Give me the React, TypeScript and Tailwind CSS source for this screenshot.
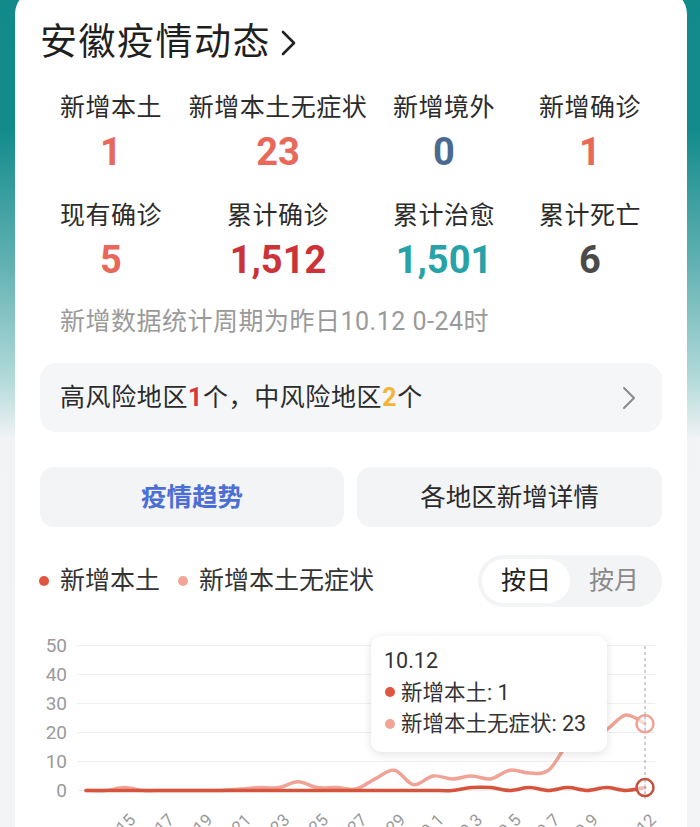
import React from "react";

const X0 = 86;
const DX = 19.276;
const yOf = (v: number) => 790.5 - v * 2.9;

const pink = [0,0,1,0,0,0,0,0,0.5,1,1,3,1,1,0.5,4,7,2,5,4,5,4,7,6,7,16,19,21,26,23];
const red = [0,0,0,0,0,0,0,0,0,0,0,0,0,0,0,0,0,0,0,0,1,1,0,1,0,1,0,1,0,1];

function smoothPath(vals: number[]) {
  const pts = vals.map((v, i) => [X0 + i * DX, yOf(v)]);
  let d = `M${pts[0][0].toFixed(1)},${pts[0][1].toFixed(1)}`;
  for (let i = 0; i < pts.length - 1; i++) {
    const p0 = pts[i - 1] || pts[i];
    const p1 = pts[i];
    const p2 = pts[i + 1];
    const p3 = pts[i + 2] || p2;
    const t = 0.17;
    const c1x = p1[0] + (p2[0] - p0[0]) * t;
    const c1y = p1[1] + (p2[1] - p0[1]) * t;
    const c2x = p2[0] - (p3[0] - p1[0]) * t;
    const c2y = p2[1] - (p3[1] - p1[1]) * t;
    d += ` C${c1x.toFixed(1)},${c1y.toFixed(1)} ${c2x.toFixed(1)},${c2y.toFixed(1)} ${p2[0].toFixed(1)},${p2[1].toFixed(1)}`;
  }
  return d;
}

const xLabels: [number, string][] = [
  [2, "9.15"], [4, "9.17"], [6, "9.19"], [8, "9.21"], [10, "9.23"], [12, "9.25"], [14, "9.27"],
  [16, "9.29"], [18, "10.1"], [20, "10.3"], [22, "10.5"], [24, "10.7"], [26, "10.9"], [29, "10.12"],
];

function Stat({ label, value, color, w }: { label: string; value: string; color: string; w: string }) {
  return (
    <div className={`flex flex-col items-center ${w}`}>
      <div className="h-[30px] leading-[30px] text-[25px] tracking-[0.5px] text-[#2b2b2b] whitespace-nowrap">{label}</div>
      <div className={`mt-[7px] h-[44px] leading-[44px] text-[38px] font-bold ${color}`}>{value}</div>
    </div>
  );
}

export default function App() {
  const w = ["w-[142px]", "w-[192px]", "w-[140px]", "w-[152px]"];
  return (
    <div className="w-[700px] h-[827px] overflow-hidden bg-[linear-gradient(to_bottom,#128a8b_0px,#138b8c_130px,#5fb0b1_260px,#b3dada_380px,#f2f3f5_440px,#f3f4f6_827px)] font-[Roboto,'Noto_Sans_CJK_SC',sans-serif]">
      <div className="ml-[15px] w-[672px] -mt-[10px] rounded-t-[24px] bg-white pt-[31px] h-[900px]">
        {/* Title */}
        <div className="flex items-center h-[44px] pl-[25px]">
          <span className="text-[37px] leading-[44px] tracking-[1.5px] text-[#1f1f1f]">安徽疫情动态</span>
          <svg width="22" height="28" viewBox="0 0 22 28" className="ml-[7px]">
            <path d="M5 3 L16 14 L5 25" fill="none" stroke="#222" strokeWidth="2.6" strokeLinecap="round" strokeLinejoin="round" />
          </svg>
        </div>

        {/* Stats */}
        <div className="flex pl-[25px] mt-[28px]">
          <Stat label="新增本土" value="1" color="text-[#e8685a]" w={w[0]} />
          <Stat label="新增本土无症状" value="23" color="text-[#e8685a]" w={w[1]} />
          <Stat label="新增境外" value="0" color="text-[#4b6a92]" w={w[2]} />
          <Stat label="新增确诊" value="1" color="text-[#e8685a]" w={w[3]} />
        </div>
        <div className="flex pl-[25px] mt-[27px]">
          <Stat label="现有确诊" value="5" color="text-[#e8685a]" w={w[0]} />
          <Stat label="累计确诊" value="1,512" color="text-[#cc3338]" w={w[1]} />
          <Stat label="累计治愈" value="1,501" color="text-[#27a2a6]" w={w[2]} />
          <Stat label="累计死亡" value="6" color="text-[#4a4a4a]" w={w[3]} />
        </div>

        {/* Note */}
        <div className="mt-[25px] pl-[45px] h-[30px] leading-[30px] text-[25px] tracking-[0.5px] text-[#9a9a9a]">
          新增数据统计周期为昨日10.12 0-24时
        </div>

        {/* Risk */}
        <div className="mx-[25px] mt-[26px] h-[69px] rounded-[16px] bg-[#f5f6f8] flex items-center justify-between pl-[20px] pr-[26px]">
          <span className="text-[25px] tracking-[0.6px] text-[#2b2b2b]">
            高风险地区<span className="font-bold text-[#d23a3f]">1</span>个，中风险地区<span className="font-bold text-[#f3b43a]">2</span>个
          </span>
          <svg width="14" height="24" viewBox="0 0 14 24">
            <path d="M2 2 L12 12 L2 22" fill="none" stroke="#8a8a8a" strokeWidth="2" strokeLinecap="round" strokeLinejoin="round" />
          </svg>
        </div>

        {/* Tabs */}
        <div className="mx-[25px] mt-[35px] flex gap-[13px]">
          <div className="w-[304px] h-[60px] rounded-[14px] bg-[#f3f4f6] flex items-center justify-center text-[25.5px] font-bold text-[#4c6fd6]">疫情趋势</div>
          <div className="w-[305px] h-[60px] rounded-[14px] bg-[#f3f4f6] flex items-center justify-center text-[25.5px] text-[#2b2b2b]">各地区新增详情</div>
        </div>

        {/* Legend + toggle */}
        <div className="mt-[28px] flex items-center justify-between pl-[24px] pr-[25px]">
          <div className="flex items-center">
            <span className="w-[10px] h-[10px] rounded-full bg-[#df553d]" />
            <span className="ml-[11px] text-[25px] text-[#333]">新增本土</span>
            <span className="ml-[18px] w-[10px] h-[10px] rounded-full bg-[#f2a497]" />
            <span className="ml-[11px] text-[25px] text-[#333]">新增本土无症状</span>
          </div>
          <div className="w-[184px] h-[52px] rounded-full bg-[#f3f4f6] p-[4px] flex">
            <div className="w-[88px] h-[44px] rounded-full bg-white flex items-center justify-center text-[25px] text-[#222]">按日</div>
            <div className="w-[88px] h-[44px] flex items-center justify-center text-[25px] text-[#8a8a8a]">按月</div>
          </div>
        </div>

        {/* Chart */}
        <div className="relative mt-[13px] w-[672px] h-[220px]">
          <svg width="672" height="220" viewBox="15 620 672 220" className="absolute left-0 top-0">
            {[0, 10, 20, 30, 40, 50].map((v) => (
              <g key={v}>
                <line x1="77" x2="655" y1={yOf(v)} y2={yOf(v)} stroke="#efefef" strokeWidth="1" />
                <text x="67" y={yOf(v)} textAnchor="end" dominantBaseline="central" fontSize="19" fill="#9a9a9a" fontFamily="Roboto, sans-serif">{v}</text>
              </g>
            ))}
            <line x1="645" x2="645" y1="646" y2="800" stroke="#a0a0a0" strokeWidth="1" strokeDasharray="3 3" />
            <path d={smoothPath(pink)} fill="none" stroke="#f0a395" strokeWidth="3.5" strokeLinejoin="round" strokeLinecap="round" />
            <path d={smoothPath(red)} fill="none" stroke="#d6533e" strokeWidth="3.5" strokeLinejoin="round" strokeLinecap="round" />
            <circle cx="645" cy={yOf(23)} r="8.5" fill="white" fillOpacity="0.6" stroke="#eca396" strokeWidth="2.5" />
            <circle cx="645" cy={yOf(1)} r="8.5" fill="white" fillOpacity="0.6" stroke="#c4503e" strokeWidth="2.5" />
            <line x1="645" x2="645" y1={yOf(23) - 8} y2={yOf(23) + 8} stroke="#a0a0a0" strokeWidth="1" strokeDasharray="3 3" />
            <line x1="645" x2="645" y1={yOf(1) - 8} y2={yOf(1) + 8} stroke="#a0a0a0" strokeWidth="1" strokeDasharray="3 3" />
            {xLabels.map(([i, t]) => {
              const x = X0 + i * DX + 3;
              const y = 812;
              return (
                <text key={t} x={x} y={y} textAnchor="end" dominantBaseline="hanging" fontSize="17" fill="#9a9a9a" fontFamily="Roboto, sans-serif" transform={`rotate(-45 ${x} ${y})`}>{t}</text>
              );
            })}
          </svg>
          {/* Tooltip */}
          <div className="absolute left-[356px] top-[16px] w-[236px] h-[116px] rounded-[10px] bg-white shadow-[0_2px_10px_rgba(0,0,0,0.12)] pl-[13px] pt-[9px] text-[21.5px] leading-[31.5px] text-[#333]">
            <div>10.12</div>
            <div className="flex items-center">
              <span className="ml-[1px] w-[10px] h-[10px] rounded-full bg-[#df553d]" />
              <span className="ml-[6px]">新增本土: 1</span>
            </div>
            <div className="flex items-center">
              <span className="ml-[1px] w-[10px] h-[10px] rounded-full bg-[#f2a497]" />
              <span className="ml-[6px]">新增本土无症状: 23</span>
            </div>
          </div>
        </div>
      </div>
    </div>
  );
}
